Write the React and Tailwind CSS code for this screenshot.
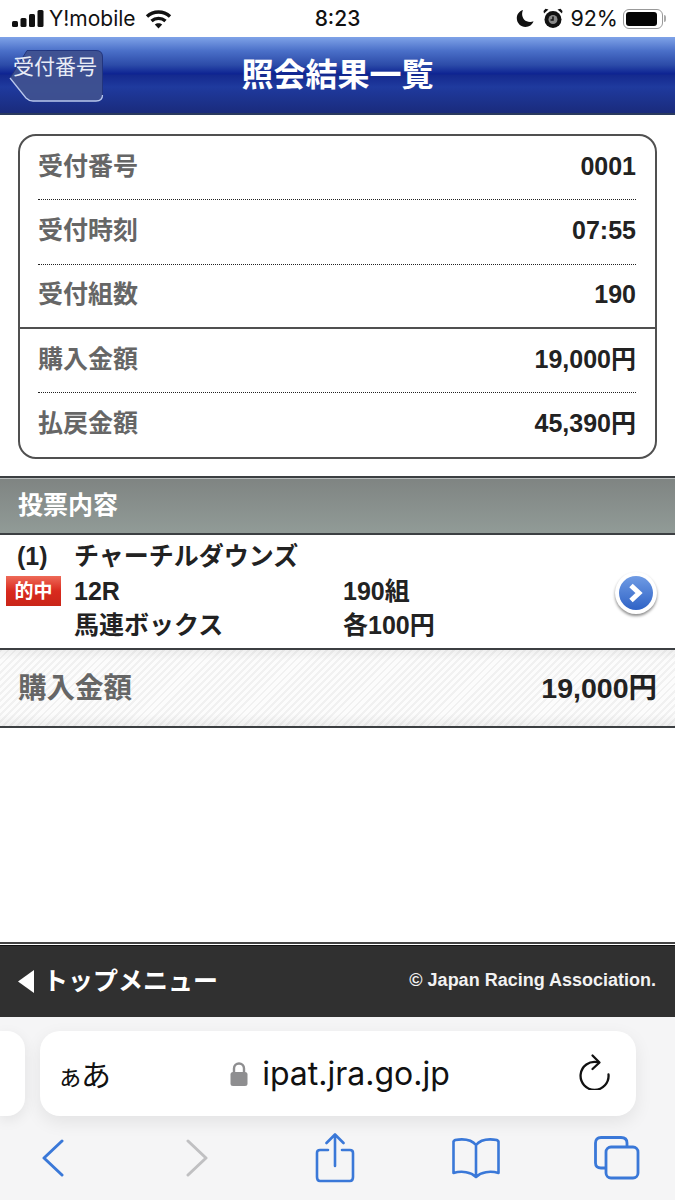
function Row({ label, value, border, h }) {
  return (
    <div className={`mr-[19px] ml-[18px] flex items-center justify-between pb-[3px] ${h} ${border || ""}`}>
      <span className="text-[25px] leading-none font-bold text-[#666]">{label}</span>
      <span className="text-[25px] leading-none font-bold text-[#222]">{value}</span>
    </div>
  );
}

function StatusBar() {
  return (
    <div className="flex h-[37px] items-center justify-between bg-white pr-[9px] pl-[9px] font-['Inter','Noto_Sans_CJK_JP',sans-serif] text-[21px] text-[#111]">
      <div className="flex w-[200px] items-center gap-[5px] pl-[3px]">
        <svg width="32" height="19" viewBox="0 0 32 19" fill="#111">
          <rect x="0" y="12" width="6" height="6" rx="1.5" />
          <rect x="8.5" y="9" width="6" height="9" rx="1.5" />
          <rect x="17" y="5" width="6" height="13" rx="1.5" />
          <rect x="25.5" y="1" width="6" height="17" rx="1.5" />
        </svg>
        <span>Y!mobile</span>
        <svg className="ml-[4px]" width="27" height="20" viewBox="0 0 27 20" fill="none" stroke="#111" strokeWidth="3.4">
          <path d="M2 7.5C8.5 1.5 18.5 1.5 25 7.5" />
          <path d="M6.5 12C10.5 8.5 16.5 8.5 20.5 12" />
          <path d="M13.5 19.5L9.8 15.5C11.8 13.8 15.2 13.8 17.2 15.5Z" fill="#111" stroke="none" />
        </svg>
      </div>
      <span className="font-medium">8:23</span>
      <div className="flex w-[200px] items-center justify-end">
        <svg width="19" height="19" viewBox="0 0 19 19" fill="#111">
          <path d="M7 1C3 2.2 .8 5.5 .8 9.3c0 4.8 3.9 8.7 8.7 8.700 3.700 0 6.900-2.200 8-5.700-1 .5-2.200.7-3.400.7-4.800 0-8-3.600-8-8 0-1.500.3-2.800.9-4z" />
        </svg>
        <svg className="ml-[8px]" width="20" height="21" viewBox="0 0 20 21">
          <circle cx="10" cy="11.500" r="8.500" fill="#111" />
          <circle cx="10" cy="11.500" r="4.500" fill="#888" />
          <path d="M10 8.500v3.500H7.500" stroke="#111" strokeWidth="1.500" fill="none" />
          <path d="M1 5.500 5.500 1.500 2.500 .8 .5 3zM19 5.500 14.500 1.500 17.500 .8 19.500 3z" fill="#111" />
        </svg>
        <span className="ml-[7px] text-[21.500px]">92%</span>
        <div className="ml-[5px] flex items-center">
          <div className="h-[20px] w-[40px] rounded-[6px] border-[1.5px] border-[#999] p-[2px]">
            <div className="h-full w-[90%] rounded-[3px] bg-[#050505]" />
          </div>
          <div className="ml-[1px] h-[7px] w-[2px] rounded-r bg-[#aaa]" />
        </div>
      </div>
    </div>
  );
}

function Header() {
  return (
    <div className="relative flex h-[78px] items-center justify-center border-b-[2px] border-[#2a3a5e] bg-[linear-gradient(180deg,#7fa3e8_0,#4a6fc8_14px,#2c4ba8_28px,#0d2392_37px,#14298e_38px,#1f3a9e_50px,#1a2b7c_76px)]">
      <span className="text-[32px] leading-none font-bold text-white">照会結果一覧</span>
      <div className="absolute top-[12px] left-[9px] h-[54px] w-[95px]">
        <svg className="absolute inset-0" width="95" height="54" viewBox="0 0 95 54">
          <path d="M18 1.500H87Q93.500 1.500 93.500 8V46Q93.500 52 87 52H24Q20 52 17 49L1 29Z" fill="#3f5190" fillOpacity=".95" stroke="#22357e" strokeWidth="1" />
          <path d="M1 29L17 49Q20 52 24 52H87Q93.500 52 93.500 46" fill="none" stroke="#b9c8ee" strokeWidth="1.300" />
        </svg>
        <span className="absolute top-[5px] left-[4px] text-[21px] leading-[26px] whitespace-nowrap text-[#e8ecf6]">受付番号</span>
      </div>
    </div>
  );
}

function Safari() {
  return (
    <div className="flex h-[183px] flex-col bg-[#f5f5f6]">
      <div className="mt-[14px] flex h-[85px] items-stretch gap-[15px]">
        <div className="h-full w-[25px] rounded-r-[18px] bg-white shadow-[0_4px_14px_rgba(0,0,0,0.08)]" />
        <div className="relative flex h-full w-[596px] items-center justify-center rounded-[20px] bg-white shadow-[0_6px_18px_rgba(0,0,0,0.08)]">
          <span className="absolute top-[23px] left-[17px] font-['Noto_Sans_CJK_JP',sans-serif] text-[30px] leading-[38px] tracking-[-2px] text-[#111]"><span className="text-[26px]">ぁ</span>あ</span>
          <div className="ml-[4px] flex items-center gap-[14px]">
            <svg width="18" height="26" viewBox="0 0 18 26">
              <path d="M4 12V7.500a5 5 0 0 1 10 0V12" fill="none" stroke="#8e8e90" strokeWidth="2.400" />
              <rect x="0.500" y="11" width="17" height="14" rx="2.500" fill="#8e8e90" />
            </svg>
            <span className="font-['Inter',sans-serif] text-[32px] leading-none text-[#111]">ipat.jra.go.jp</span>
          </div>
          <svg className="absolute top-[21px] right-[25px]" width="32" height="38" viewBox="0 0 32 38" fill="none" stroke="#111" strokeWidth="2.300" strokeLinecap="round" strokeLinejoin="round">
            <path d="M18.500 9.200A14 14 0 1 0 29.500 21.500" transform="translate(0 1)" />
            <path d="M13.500 2.500 20.500 9.500 13.500 16" transform="translate(0 1)" />
          </svg>
        </div>
      </div>
      <div className="flex flex-1 items-center">
        <div className="flex w-[105px] justify-center">
          <svg width="24" height="38" viewBox="0 0 24 38" fill="none" stroke="#3a78d8" strokeWidth="3" strokeLinecap="round" strokeLinejoin="round">
            <path d="M21 2 3 19 21 36" />
          </svg>
        </div>
        <div className="flex w-[184px] justify-center">
          <svg width="24" height="38" viewBox="0 0 24 38" fill="none" stroke="#c0c0c2" strokeWidth="3" strokeLinecap="round" strokeLinejoin="round">
            <path d="M3 2 21 19 3 36" />
          </svg>
        </div>
        <div className="flex w-[92px] justify-center">
          <svg width="40" height="50" viewBox="0 0 40 50" fill="none" stroke="#3a78d8" strokeWidth="2.600" strokeLinecap="round" strokeLinejoin="round">
            <path d="M13 17H5Q2 17 2 20V44Q2 48 5 48H35Q38 48 38 44V20Q38 17 35 17H27" />
            <path d="M20 33V2M11.500 10 20 1.500 28.500 10" />
          </svg>
        </div>
        <div className="flex w-[190px] justify-center">
          <svg width="48" height="42" viewBox="0 0 48 42" fill="none" stroke="#3a78d8" strokeWidth="2.600" strokeLinecap="round" strokeLinejoin="round">
            <path d="M24 8C20 3 12 1.500 3 3L1.500 4.500V36C10 33.500 19 35 24 40 29 35 38 33.500 46.500 36V4.500L45 3C36 1.500 28 3 24 8ZM24 8V40" />
          </svg>
        </div>
        <div className="flex w-[92px] justify-center">
          <svg width="46" height="44" viewBox="0 0 46 44" fill="none" stroke="#3a78d8" strokeWidth="2.800" strokeLinejoin="round">
            <path d="M11 32H7Q1.500 32 1.500 27V7Q1.500 1.500 7 1.500H27Q33 1.500 33 7V11" />
            <rect x="12" y="11" width="32" height="31" rx="5" />
          </svg>
        </div>
      </div>
    </div>
  );
}

export default function App() {
  return (
    <div className="flex h-[1200px] w-[675px] flex-col overflow-hidden bg-white font-['Liberation_Sans','Noto_Sans_CJK_JP',sans-serif]">
      <StatusBar />
      <Header />
      <div className="mx-[18px] mt-[19px] rounded-[18px] border-2 border-[#505050] bg-white">
        <Row label="受付番号" value="0001" h="h-[64px]" border="border-b border-dotted border-[#222]" />
        <Row label="受付時刻" value="07:55" h="h-[65px]" border="border-b border-dotted border-[#222]" />
        <Row label="受付組数" value="190" h="h-[62px]" />
        <div className="border-t-2 border-[#505050]">
          <Row label="購入金額" value="19,000円" h="h-[64px]" border="border-b border-dotted border-[#222]" />
          <Row label="払戻金額" value="45,390円" h="h-[64px]" />
        </div>
      </div>
      <div className="mt-[17px] flex h-[59px] items-center border-y-[2px] border-[#3c3f42] bg-[linear-gradient(180deg,#7f8482,#919b97)] pl-[18px] shadow-[inset_0_1px_0_#b8bcbc]">
        <span className="text-[25px] leading-none font-bold text-white">投票内容</span>
      </div>
      <div className="relative h-[113px] bg-white text-[25px] leading-none font-bold text-[#222]">
        <div className="flex h-[43px] items-center pl-[17px]">
          <span className="w-[57px]">(1)</span>
          <span>チャーチルダウンズ</span>
        </div>
        <div className="flex h-[26px] items-center pl-[74px]">
          <span className="w-[269px]">12R</span>
          <span>190組</span>
        </div>
        <div className="flex h-[42px] items-center pl-[74px]">
          <span className="w-[269px]">馬連ボックス</span>
          <span>各100円</span>
        </div>
        <div className="absolute top-[41px] left-[6px] flex h-[30px] w-[55px] items-center justify-center bg-[linear-gradient(180deg,#ee6a58,#d92a1e_50%,#c92518)] text-[19px] text-white">的中</div>
        <div className="absolute top-[37px] right-[18px] flex h-[42px] w-[42px] items-center justify-center rounded-full bg-white shadow-[0_2px_3px_rgba(0,0,0,0.45)]">
          <div className="flex h-[34px] w-[34px] items-center justify-center rounded-full bg-[linear-gradient(180deg,#6f9be4,#2f63c6)]">
            <svg width="18" height="20" viewBox="0 0 18 20" fill="none" stroke="#fff" strokeWidth="5">
              <path d="M4 2.500 12 10 4 17.500" />
            </svg>
          </div>
        </div>
      </div>
      <div className="flex h-[80px] items-center justify-between border-y-[2px] border-[#3c3f42] bg-[linear-gradient(180deg,rgba(0,0,0,0.05),rgba(0,0,0,0)_10px,rgba(0,0,0,0)_64px,rgba(0,0,0,0.05)),repeating-linear-gradient(135deg,#f1f1f1_0,#f1f1f1_2px,#fcfcfc_2px,#fcfcfc_5px)] px-[18px] pt-[1px] text-[28.500px] leading-none font-bold">
        <span className="text-[#666]">購入金額</span>
        <span className="text-[#222]">19,000円</span>
      </div>
      <div className="flex-1 bg-white" />
      <div className="h-[3px] border-t-[2px] border-[#444] bg-white" />
      <div className="flex h-[72px] items-center justify-between border-t border-[#111] bg-[#303030] pr-[19px] pb-[1px] pl-[18px] text-white">
        <div className="flex items-center gap-[9px]">
          <svg width="16" height="23" viewBox="0 0 16 23"><path d="M16 0V23L0 11.500Z" fill="#fff" /></svg>
          <span className="text-[25px] leading-none font-bold">トップメニュー</span>
        </div>
        <span className="pb-[2px] text-[18px] leading-none font-bold text-[#f2f2f2]">© Japan Racing Association.</span>
      </div>
      <Safari />
    </div>
  );
}
